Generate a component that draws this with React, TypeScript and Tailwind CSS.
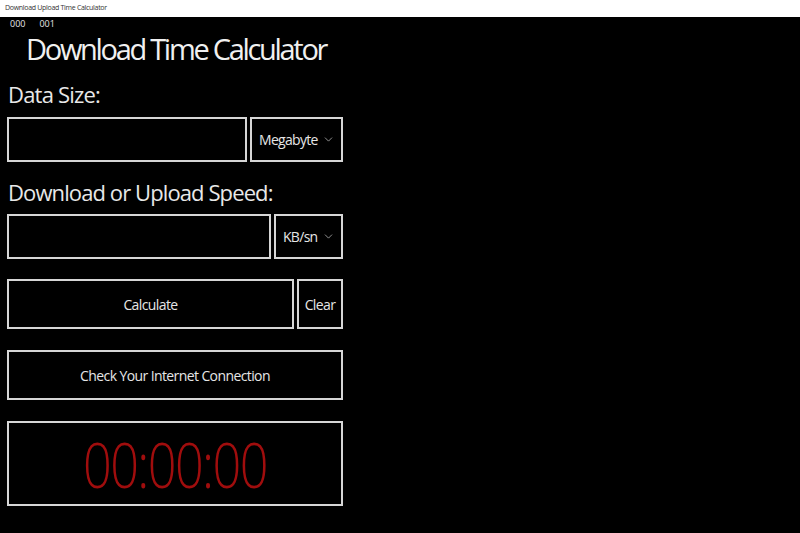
import { ChevronDown } from "lucide-react"

const font = { fontFamily: '"Open Sans", "Noto Sans", sans-serif' }

function Select({ label, width }: { label: string; width: string }) {
  return (
    <div className={`${width} flex h-full items-center justify-between border-2 border-[#d6d6d6] pl-[7px] pr-[6px] text-[14px] text-[#e6e6e6]`}>
      <span className="tracking-[-0.7px]">{label}</span>
      <ChevronDown className="h-[13px] w-[13px] text-[#bdbdbd]" strokeWidth={1.4} />
    </div>
  )
}

export default function App() {
  return (
    <div className="flex h-[533px] w-[800px] flex-col bg-black" style={font}>
      <div className="flex h-[17px] shrink-0 items-center bg-white pl-[5px] text-[7px] tracking-[-0.3px] text-[#333]">
        Download Upload Time Calculator
      </div>

      <div className="flex gap-[14px] pl-[10px] pt-[2px] text-[9px] leading-[10px] text-[#e6e6e6]">
        <span>000</span>
        <span>001</span>
      </div>

      <div className="flex w-[350px] flex-col px-[7px]">
        <h1 className="ml-[19px] mt-[1px] whitespace-nowrap text-[29px] leading-[38px] tracking-[-2.3px] text-[#f0f0f0]">
          Download Time Calculator
        </h1>

        <div className="mt-[11px] whitespace-nowrap pl-[1px] text-[22px] leading-[30px] tracking-[-0.8px] text-[#e8e8e8]">Data Size:</div>
        <div className="mt-[8px] flex h-[45px] gap-[3px]">
          <div className="flex-1 border-2 border-[#d6d6d6]" />
          <Select label="Megabyte" width="w-[93px]" />
        </div>

        <div className="mt-[15px] whitespace-nowrap pl-[1px] text-[22px] leading-[30px] tracking-[-0.9px] text-[#e8e8e8]">
          Download or Upload Speed:
        </div>
        <div className="mt-[7px] flex h-[45px] gap-[3px]">
          <div className="flex-1 border-2 border-[#d6d6d6]" />
          <Select label="KB/sn" width="w-[69px]" />
        </div>

        <div className="mt-[20px] flex h-[50px] gap-[3px] text-[14px] tracking-[-0.6px] text-[#e6e6e6]">
          <div className="flex flex-1 items-center justify-center border-2 border-[#d6d6d6]">Calculate</div>
          <div className="flex w-[46px] items-center justify-center border-2 border-[#d6d6d6]">Clear</div>
        </div>

        <div className="mt-[21px] flex h-[50px] items-center justify-center border-2 border-[#d6d6d6] text-[14px] tracking-[-0.6px] text-[#e6e6e6]">
          Check Your Internet Connection
        </div>

        <div className="mt-[21px] flex h-[85px] items-center justify-center border-2 border-[#d6d6d6]">
          <span className="inline-block scale-x-[0.8] text-[63px] font-light leading-none tracking-[-2px] text-[#a00d0d]">00:00:00</span>
        </div>
      </div>
    </div>
  )
}
